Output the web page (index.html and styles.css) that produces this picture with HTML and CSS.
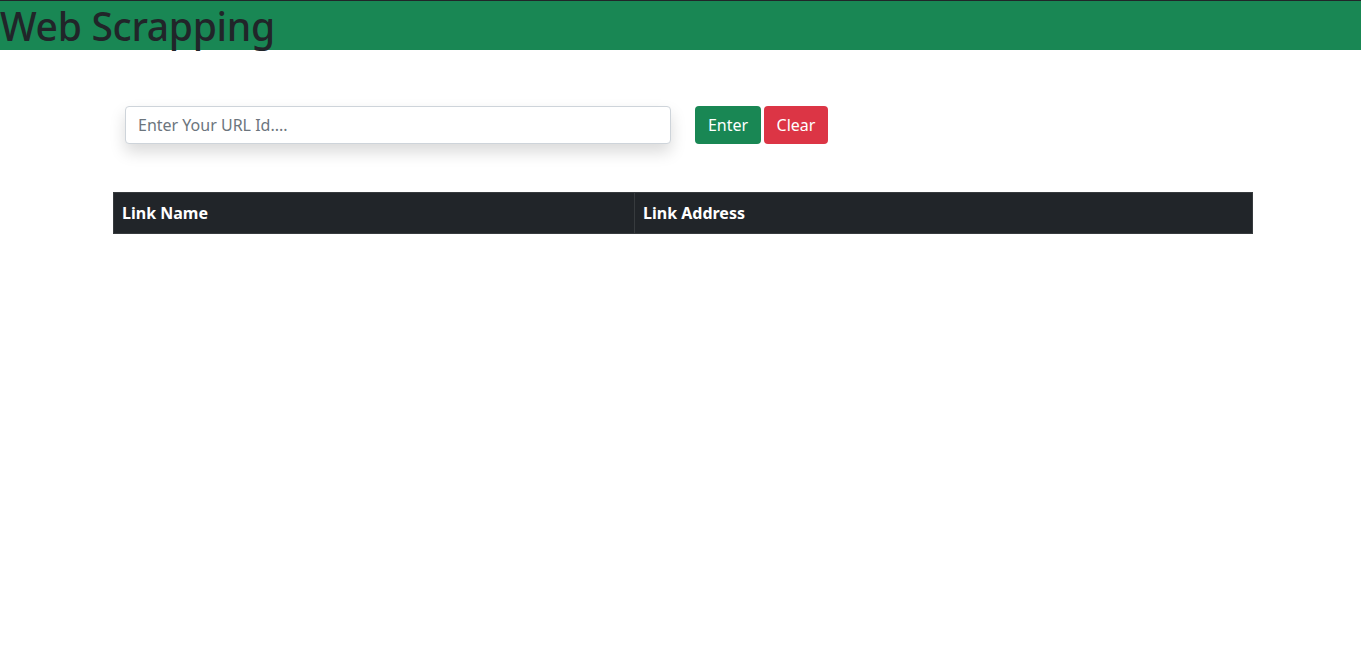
FILE: index.html
```html
<!DOCTYPE html>
<html>
<head>
<meta charset="utf-8">
<link rel="stylesheet" href="styles.css">
</head>
<body>
<header class="topbar"><h1 class="title">Web Scrapping</h1></header>
<main class="container">
  <div class="form-row">
    <input class="url-input" type="text" placeholder="Enter Your URL Id....">
    <div class="btns">
      <button class="btn btn-enter">Enter</button>
      <button class="btn btn-clear">Clear</button>
    </div>
  </div>
  <table class="links">
    <thead>
      <tr><th class="col-name">Link Name</th><th>Link Address</th></tr>
    </thead>
  </table>
</main>
</body>
</html>
```
FILE: styles.css
```css
* { box-sizing: border-box; }
body {
  margin: 0;
  font-family: "Noto Sans", sans-serif;
  color: #212529;
  background: #fff;
}
.topbar {
  background: #198754;
  border-top: 1px solid #212529;
  height: 50px;
  padding-top: 1px;
}
.title {
  margin: 0;
  font-size: 39px;
  font-weight: 500;
  line-height: 48px;
  color: #212529;
  letter-spacing: -0.3px;
}
.container {
  width: 1140px;
  margin-left: 113px;
  padding-top: 56px;
}
.form-row {
  display: flex;
  align-items: center;
  padding-left: 12px;
}
.url-input {
  width: 546px;
  height: 38px;
  border: 1px solid #ced4da;
  border-radius: 4px;
  padding: 6px 12px;
  font-family: "Noto Sans", sans-serif;
  font-size: 16px;
  color: #212529;
  box-shadow: 0 8px 16px rgba(0,0,0,0.15);
  outline: none;
}
.url-input::placeholder { color: #6c757d; }
.btns {
  margin-left: 24px;
  display: flex;
  gap: 3px;
}
.btn {
  height: 38px;
  border: none;
  border-radius: 4px;
  padding: 0 12px;
  font-family: "Noto Sans", sans-serif;
  font-size: 16px;
  color: #fff;
}
.btn-enter { background: #198754; width: 66px; }
.btn-clear { background: #dc3545; width: 64px; }
.links {
  margin-top: 48px;
  width: 1140px;
  border-collapse: collapse;
  background: #212529;
  table-layout: fixed;
}
.links th {
  height: 41px;
  text-align: left;
  color: #fff;
  font-size: 16px;
  font-weight: 700;
  padding: 0 8px;
  border: 1px solid #373b3e;
}
.links th.col-name { width: 521px; }
```
